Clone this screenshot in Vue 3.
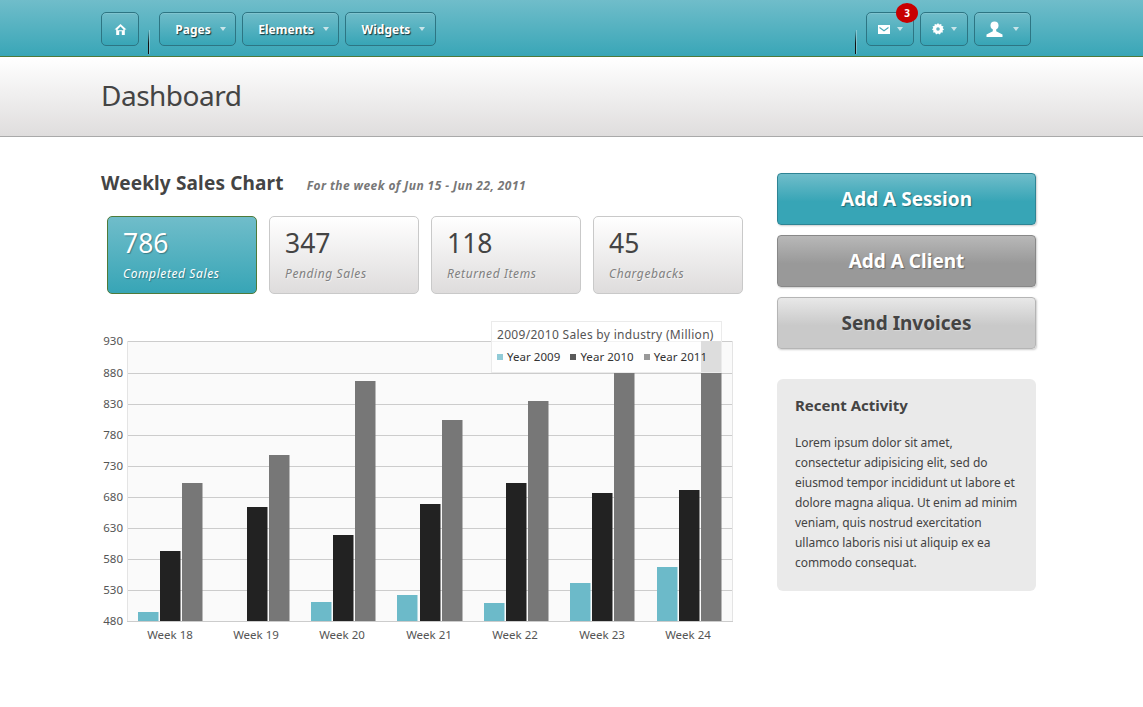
<script setup>
const navLeft = [
  { label: 'Pages', width: 77 },
  { label: 'Elements', width: 97 },
  { label: 'Widgets', width: 91 }
]
const stats = [
  { value: '786', label: 'Completed Sales', active: true },
  { value: '347', label: 'Pending Sales' },
  { value: '118', label: 'Returned Items' },
  { value: '45', label: 'Chargebacks' }
]
const yLabels = [930, 880, 830, 780, 730, 680, 630, 580, 530, 480]
const gridY = [341, 373, 404, 435, 466, 497, 528, 559, 590, 621]
const weeks = [
  { name: 'Week 18', cx: 170, bars: [[138, 612], [160, 551], [182, 483]] },
  { name: 'Week 19', cx: 256, bars: [[247, 507], [269, 455]], first: 1 },
  { name: 'Week 20', cx: 342, bars: [[311, 602], [333, 535], [355, 381]] },
  { name: 'Week 21', cx: 429, bars: [[397, 595], [420, 504], [442, 420]] },
  { name: 'Week 22', cx: 515, bars: [[484, 603], [506, 483], [528, 401]] },
  { name: 'Week 23', cx: 602, bars: [[570, 583], [592, 493], [614, 372]] },
  { name: 'Week 24', cx: 688, bars: [[657, 567], [679, 490], [701, 341]] }
]
const colors = ['#6cbac9', '#222222', '#777777']
const barColor = (week, i) => colors[i + (week.first || 0)]
const legend = [
  { label: 'Year 2009', color: '#6cbac9' },
  { label: 'Year 2010', color: '#222222' },
  { label: 'Year 2011', color: '#777777' }
]
const activity = [
  'Lorem ipsum dolor sit amet,',
  'consectetur adipisicing elit, sed do',
  'eiusmod tempor incididunt ut labore et',
  'dolore magna aliqua. Ut enim ad minim',
  'veniam, quis nostrud exercitation',
  'ullamco laboris nisi ut aliquip ex ea',
  'commodo consequat.'
]
</script>

<template>
  <div class="page">
    <header class="topbar">
      <div class="nav-group">
        <button class="nav-btn home">
          <svg width="13" height="13" viewBox="0 0 13 13"><path d="M6.5 1 L12.5 6.6 L10.8 6.6 L10.8 12 L7.8 12 L7.8 8.2 L5.2 8.2 L5.2 12 L2.2 12 L2.2 6.6 L.5 6.6 Z" fill="#fff"/><path d="M3.6 6.6 L6.5 3.6 L9.4 6.6 L9.4 7.2 L3.6 7.2 Z" fill="#48aab9"/></svg>
        </button>
        <span class="divider"></span>
        <button v-for="item in navLeft" :key="item.label" class="nav-btn text" :style="{ width: item.width + 'px' }">
          {{ item.label }}<i class="caret"></i>
        </button>
      </div>
      <div class="nav-group right">
        <span class="divider"></span>
        <button class="nav-btn icon mail">
          <svg width="12" height="9" viewBox="0 0 12 9"><path d="M0 0H12V9H0Z" fill="#fff"/><path d="M1.5 1.8 L6 5 L10.5 1.8 L10.5 3.2 L6 6.4 L1.5 3.2Z" fill="#48aab9"/></svg>
          <i class="caret"></i>
          <span class="badge">3</span>
        </button>
        <button class="nav-btn icon">
          <svg width="12" height="12" viewBox="0 0 12 12"><path d="M6 0 L7.2 1.6 L9.3 .9 L9.5 2.9 L11.5 3.3 L10.7 5.1 L12 6.4 L10.5 7.6 L10.9 9.5 L8.9 9.6 L8 11.5 L6 10.6 L4 11.5 L3.1 9.6 L1.1 9.5 L1.5 7.6 L0 6.4 L1.3 5.1 L.5 3.3 L2.5 2.9 L2.7 .9 L4.8 1.6Z" fill="#fff"/><circle cx="6" cy="6" r="1.8" fill="#62b4c2"/></svg>
          <i class="caret"></i>
        </button>
        <button class="nav-btn icon user">
          <svg width="17" height="16" viewBox="0 0 17 16"><circle cx="8.5" cy="4.6" r="4" fill="#fff"/><path d="M6.8 7.5H10.2V10.2L16.5 13.5V16H.5V13.5L6.8 10.2Z" fill="#fff"/></svg>
          <i class="caret"></i>
        </button>
      </div>
    </header>

    <section class="title-bar">
      <h1>Dashboard</h1>
    </section>

    <main class="content">
      <div class="left">
        <div class="heading">
          <h2>Weekly Sales Chart</h2>
          <em>For the week of Jun 15 - Jun 22, 2011</em>
        </div>
        <div class="stats">
          <div v-for="s in stats" :key="s.label" class="stat" :class="{ active: s.active }">
            <div class="value">{{ s.value }}</div>
            <div class="label">{{ s.label }}</div>
          </div>
        </div>
        <div class="chart">
          <svg width="660" height="340" viewBox="95 310 660 340" class="chart-svg">
            <rect x="127" y="341" width="606" height="280" fill="#fafafa" />
            <line v-for="y in gridY" :key="y" x1="127" x2="733" :y1="y + .5" :y2="y + .5" stroke="#cccccc" />
            <line x1="127.5" x2="127.5" y1="341" y2="621" stroke="#e4e4e4" />
            <line x1="732.5" x2="732.5" y1="341" y2="621" stroke="#e4e4e4" />
            <g v-for="w in weeks" :key="w.name">
              <rect v-for="(b, i) in w.bars" :key="i" :x="b[0]" :y="b[1]" width="20.5" :height="621 - b[1]" :fill="barColor(w, i)" />
              <text :x="w.cx" y="639" text-anchor="middle" class="axis">{{ w.name }}</text>
            </g>
            <text v-for="(l, i) in yLabels" :key="l" x="123" :y="gridY[i] + 4" text-anchor="end" class="axis">{{ l }}</text>
          </svg>
          <div class="legend">
            <div class="legend-title">2009/2010 Sales by industry (Million)</div>
            <div class="legend-items">
              <span v-for="l in legend" :key="l.label" class="legend-item">
                <i :style="{ background: l.color }"></i>{{ l.label }}
              </span>
            </div>
          </div>
        </div>
      </div>

      <aside class="right-col">
        <a class="action teal">Add A Session</a>
        <a class="action gray">Add A Client</a>
        <a class="action light">Send Invoices</a>
        <div class="activity">
          <h3>Recent Activity</h3>
          <p><span v-for="line in activity" :key="line" class="line">{{ line }}</span></p>
        </div>
      </aside>
    </main>
  </div>
</template>

<style>
html, body { margin: 0; background: #fff; }
</style>

<style scoped>
.page {
  width: 1143px;
  height: 707px;
  overflow: hidden;
  font-family: "Noto Sans", "Open Sans", sans-serif;
  color: #444;
  background: #fff;
}
.topbar {
  height: 57px;
  box-sizing: border-box;
  padding: 12px 112px 0 101px;
  display: flex;
  justify-content: space-between;
  background: linear-gradient(#70bdca, #39a6b7);
  border-bottom: 1px solid #4f7a3a;
}
.nav-group { display: flex; gap: 6px; align-items: flex-start; }
.nav-btn {
  position: relative;
  height: 34px;
  box-sizing: border-box;
  padding: 0;
  margin: 0;
  display: flex;
  align-items: center;
  justify-content: center;
  border: 1px solid #2d7583;
  border-radius: 5px;
  background: linear-gradient(#6fbcc9, #37a5b6);
  box-shadow: inset 0 1px 0 rgba(255,255,255,.12);
  font-family: inherit;
}
.home { width: 38px; }
.text {
  padding-left: 6px;
  color: #fff;
  font-size: 12px;
  font-weight: 700;
  text-shadow: 1px 1px 1px rgba(0,0,0,.7);
}
.text .caret { margin-left: 9px; }
.icon { width: 48px; }
.icon .caret { margin-left: 7px; }
.user { width: 57px; }
.user .caret { margin-left: 10px; }
.caret {
  width: 0;
  height: 0;
  margin-top: -1px;
  border-left: 3.5px solid transparent;
  border-right: 3.5px solid transparent;
  border-top: 4px solid #c8e4e9;
}
.divider {
  width: 1px;
  height: 24px;
  margin: 18px 4px 0 3px;
  background: linear-gradient(rgba(0,0,0,0), #111 55%);
  box-shadow: 1px 0 0 rgba(255,255,255,.3);
}
.right .divider { margin: 18px 4px 0 0; }
.badge {
  position: absolute;
  top: -10px;
  left: 29px;
  width: 22px;
  height: 20px;
  border-radius: 50%;
  background: #c80000;
  color: #fff;
  font-size: 10px;
  font-weight: 700;
  line-height: 20px;
  text-align: center;
}
.title-bar {
  height: 79px;
  box-sizing: border-box;
  padding-left: 101px;
  background: linear-gradient(#fff, #dfdddd);
  border-bottom: 1px solid #a9a9a9;
  margin-top: 1px;
}
.title-bar h1 {
  margin: 0;
  padding-top: 18px;
  font-size: 28px;
  letter-spacing: -.5px;
  line-height: 38px;
  font-weight: 400;
  color: #444;
}
.content {
  display: flex;
  padding: 36px 0 0 101px;
}
.left { width: 648px; margin-right: 28px; }
.heading {
  display: flex;
  align-items: baseline;
  height: 43px;
  margin-top: -2px;
  padding-bottom: 2px;
}
.heading h2 {
  margin: 0 23px 0 0;
  font-size: 19px;
  letter-spacing: .15px;
  line-height: 24px;
  font-weight: 700;
  color: #444;
}
.heading em {
  font-size: 12px;
  letter-spacing: .42px;
  font-weight: 700;
  color: #777;
}
.stats { display: flex; gap: 12px; padding-left: 6px; }
.stat {
  width: 150px;
  height: 78px;
  box-sizing: border-box;
  padding: 9px 15px;
  border: 1px solid #c9c9c9;
  border-radius: 5px;
  background: linear-gradient(#fff, #dedcdc);
}
.stat .value { font-size: 26.5px; line-height: 34px; color: #444; }
.stat .label { font-size: 12px; letter-spacing: .6px; line-height: 18px; margin-top: 5px; font-style: italic; color: #808080; text-shadow: 1px 1px 0 rgba(255,255,255,.5); }
.stat.active {
  border-color: #4f7a3a;
  background: linear-gradient(#70bdca, #37a5b6);
}
.stat.active .value, .stat.active .label { color: #fff; text-shadow: 1px 1px 1px rgba(0,0,0,.3); }
.chart { position: relative; height: 340px; margin: 16px 0 0 -6px; }
.chart-svg { display: block; }
.axis { font-size: 11.5px; fill: #555; font-family: "Noto Sans", sans-serif; }
.legend {
  position: absolute;
  left: 396px;
  top: 11px;
  width: 231px;
  height: 52px;
  box-sizing: border-box;
  padding: 3px 5px;
  border: 1px solid #ebebeb;
  background: rgba(255,255,255,.75);
}
.legend-title { font-size: 12px; letter-spacing: .3px; line-height: 20px; color: #555; white-space: nowrap; }
.legend-items { display: flex; gap: 10px; margin-top: 3px; }
.legend-item { font-size: 11.5px; letter-spacing: .05px; line-height: 18px; color: #333; white-space: nowrap; display: flex; align-items: center; }
.legend-item i { width: 6px; height: 6px; margin-right: 4px; opacity: .75; }
.right-col { width: 259px; }
.action {
  display: block;
  height: 52px;
  box-sizing: border-box;
  margin-bottom: 10px;
  border-radius: 4px;
  text-align: center;
  font-size: 19px;
  font-weight: 700;
  line-height: 50px;
  box-shadow: 1px 1px 2px rgba(0,0,0,.2);
  text-shadow: 1px 1px 1px rgba(0,0,0,.35);
}
.teal { color: #fff; border: 1px solid #2e8494; background: linear-gradient(#70bdca, #37a5b6 55%); }
.gray { color: #fff; border: 1px solid #888; background: linear-gradient(#b8b8b8, #999 55%); }
.light { color: #444; border: 1px solid #b5b5b5; background: linear-gradient(#e8e8e8, #c9c9c9 55%); text-shadow: 1px 1px 1px rgba(255,255,255,.3); }
.activity {
  margin-top: 30px;
  height: 212px;
  box-sizing: border-box;
  padding: 17px 18px;
  border-radius: 6px;
  background: #eaeaea;
}
.activity h3 { margin: 0 0 19px; font-size: 15px; line-height: 18px; font-weight: 700; color: #444; }
.activity p { margin: 0; font-size: 12px; letter-spacing: -.05px; line-height: 20px; color: #444; }
.line { display: block; white-space: nowrap; }
</style>
